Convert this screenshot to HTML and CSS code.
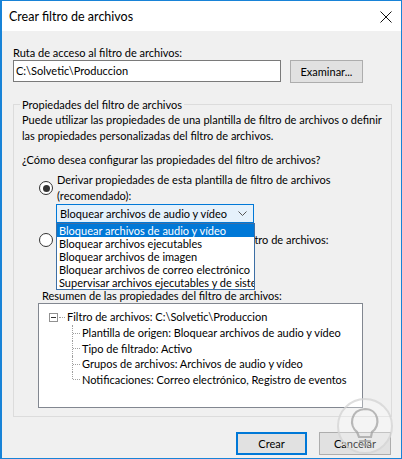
FILE: index.html
```html
<!DOCTYPE html>
<html lang="es">
<head>
    <meta charset="UTF-8">
    <title>Crear filtro de archivos</title>
    <link rel="stylesheet" href="styles.css">
</head>
<body>
<div class="window">
    <div class="titlebar">
        <span class="title">Crear filtro de archivos</span>
        <svg class="close" width="12" height="12" viewBox="0 0 12 12">
            <path d="M0.5 0.5 L11.5 11.5 M11.5 0.5 L0.5 11.5" stroke="#111" stroke-width="1" fill="none"/>
        </svg>
    </div>
    <div class="main">
        <div class="label">Ruta de acceso al filtro de archivos:</div>
        <div class="path-row">
            <div class="input">C:\Solvetic\Produccion</div>
            <div class="btn">Examinar...</div>
        </div>

        <fieldset class="group">
            <legend>Propiedades del filtro de archivos</legend>
            <p class="desc">Puede utilizar las propiedades de una plantilla de filtro de archivos o definir<br>las propiedades personalizadas del filtro de archivos.</p>
            <p class="question">¿Cómo desea configurar las propiedades del filtro de archivos?</p>

            <div class="option first">
                <span class="radio checked"></span>
                <span class="opt-text">Derivar propiedades de esta plantilla de filtro de archivos<br>(recomendado):</span>
            </div>

            <div class="combo-wrap">
                <div class="combo">
                    <span>Bloquear archivos de audio y vídeo</span>
                    <svg width="9" height="6" viewBox="0 0 9 6"><path d="M0.5 0.5 L4.5 4.5 L8.5 0.5" stroke="#555" fill="none"/></svg>
                </div>
                <!-- lista desplegada -->
                <ul class="dropdown">
                    <li class="sel">Bloquear archivos de audio y vídeo</li>
                    <li>Bloquear archivos ejecutables</li>
                    <li>Bloquear archivos de imagen</li>
                    <li>Bloquear archivos de correo electrónico</li>
                    <li>Supervisar archivos ejecutables y de sistema</li>
                </ul>
            </div>

            <div class="option second">
                <span class="radio"></span>
                <span class="opt-text">Definir propiedades personalizadas del filtro de archivos:</span>
            </div>

            <div class="summary-label">Resumen de las propiedades del filtro de archivos:</div>
            <div class="tree">
                <div class="root">
                    <span class="minus"></span><span class="hdots"></span>Filtro de archivos: C:\Solvetic\Produccion
                </div>
                <ul class="children">
                    <li>Plantilla de origen: Bloquear archivos de audio y vídeo</li>
                    <li>Tipo de filtrado: Activo</li>
                    <li>Grupos de archivos: Archivos de audio y vídeo</li>
                    <li>Notificaciones: Correo electrónico, Registro de eventos</li>
                </ul>
            </div>
        </fieldset>

        <div class="buttons">
            <div class="btn default">Crear</div>
            <div class="btn">Cancelar</div>
        </div>

        <!-- marca de agua -->
        <svg class="watermark" width="60" height="60" viewBox="0 0 60 60">
            <circle cx="30" cy="30" r="27" fill="#fff" fill-opacity="0.35" stroke="#d6d6d6" stroke-width="2"/>
            <path d="M22 36 C14 30 15 14 30 13 C44 13 46 30 37 36 L36 41 L24 41 Z" fill="none" stroke="#a9a9a9" stroke-width="2.2"/>
            <path d="M24 45 L36 45 M26 49 L34 49" stroke="#a9a9a9" stroke-width="2"/>
        </svg>
    </div>
</div>
</body>
</html>
```

FILE: styles.css
```css
html, body {
    margin: 0;
    padding: 0;
    background: #fff;
}
body {
    font-family: "Lato", "Noto Sans", sans-serif;
    font-size: 11px;
    color: #000;
}
.window {
    width: 402px;
    height: 459px;
    box-sizing: border-box;
    border: 1px solid #1883d7;
    border-left-width: 2px;
    display: flex;
    flex-direction: column;
}
.titlebar {
    height: 30px;
    background: #fff;
    display: flex;
    align-items: center;
    justify-content: space-between;
    padding: 0 9px 0 7px;
    font-size: 12.5px;
}
.close {
    margin-top: 1px;
}
.main {
    position: relative;
    flex: 1;
    background: #f0f0f0;
    padding: 15px 9px 0 11px;
    white-space: nowrap;
}
.label {
    line-height: 14px;
}
.path-row {
    display: flex;
    align-items: flex-start;
}
.input {
    width: 268px;
    height: 22px;
    box-sizing: border-box;
    border: 1px solid #7a7a7a;
    background: #fff;
    padding: 0 2px;
    line-height: 20px;
}
.btn {
    box-sizing: border-box;
    height: 23px;
    width: 72px;
    border: 1px solid #adadad;
    background: #e1e1e1;
    text-align: center;
    line-height: 21px;
}
.path-row .btn {
    margin-left: 9px;
    width: 73px;
}
.group {
    margin: 14px 0 0 0;
    padding: 0 10px 8px 8px;
    border: 1px solid #dcdcdc;
    min-width: 0;
}
.group legend {
    padding: 0 2px;
    margin-left: -2px;
    line-height: 15px;
}
.desc, .question {
    margin: 0;
    line-height: 16px;
}
.question {
    margin-top: 8px;
}
.option {
    display: flex;
    align-items: center;
    line-height: 16px;
    margin-left: 17px;
}
.option.first {
    margin-top: 4px;
}
.option.second {
    margin-top: 9px;
}
.radio {
    width: 14px;
    height: 14px;
    box-sizing: border-box;
    border: 1px solid #333;
    border-radius: 50%;
    background: #fff;
    margin-right: 4px;
    flex: none;
    display: flex;
    align-items: center;
    justify-content: center;
}
.radio.checked::after {
    content: "";
    width: 7px;
    height: 7px;
    border-radius: 50%;
    background: #333;
}
.combo-wrap {
    position: relative;
    margin-left: 34px;
    width: 198px;
}
.combo {
    height: 19px;
    box-sizing: border-box;
    border: 1px solid #0078d7;
    background: #e5f1fb;
    display: flex;
    align-items: center;
    justify-content: space-between;
    padding: 0 6px 0 3px;
}
.dropdown {
    position: absolute;
    left: 0;
    top: 19px;
    width: 199px;
    box-sizing: border-box;
    margin: 0;
    padding: 0;
    list-style: none;
    background: #fff;
    border: 1px solid #3d6fa5;
    z-index: 2;
}
.dropdown li {
    line-height: 13px;
    padding-left: 2px;
    overflow: hidden;
}
.dropdown li.sel {
    background: #0078d7;
    color: #fff;
}
.summary-label {
    margin-top: 41px;
    margin-left: 20px;
    line-height: 14px;
}
.tree {
    margin-left: 16px;
    width: 325px;
    height: 105px;
    box-sizing: border-box;
    border: 1px solid #828790;
    background: #fff;
    padding: 5px 0 0 10px;
}
.root {
    display: flex;
    align-items: center;
    line-height: 16px;
}
.minus {
    width: 9px;
    height: 9px;
    box-sizing: border-box;
    border: 1px solid #919191;
    position: relative;
    flex: none;
}
.minus::after {
    content: "";
    position: absolute;
    left: 1px;
    top: 3px;
    width: 5px;
    height: 1px;
    background: #333;
}
.hdots {
    width: 6px;
    border-top: 1px dotted #a0a0a0;
    margin: 0 2px 0 1px;
}
.children {
    list-style: none;
    margin: 0 0 0 23px;
    padding: 0;
}
.children li {
    position: relative;
    line-height: 15.5px;
    padding-left: 10px;
}
.children li::before {
    content: "";
    position: absolute;
    left: 0;
    top: 0;
    bottom: 0;
    border-left: 1px dotted #a0a0a0;
}
.children li:last-child::before {
    bottom: 50%;
}
.children li::after {
    content: "";
    position: absolute;
    left: 1px;
    top: 50%;
    width: 7px;
    border-top: 1px dotted #a0a0a0;
}
.buttons {
    display: flex;
    justify-content: flex-end;
    gap: 12px;
    margin-top: 15px;
    padding-right: 1px;
}
.btn.default {
    width: 71px;
    border: 2px solid #0078d7;
    line-height: 20px;
}
.watermark {
    position: absolute;
    right: 6px;
    bottom: 2px;
    opacity: 0.8;
}
```
